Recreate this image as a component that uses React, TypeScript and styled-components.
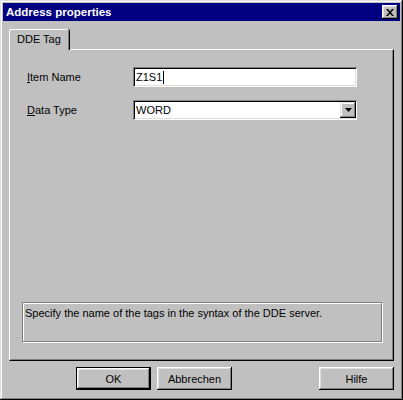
import React from "react";
import styled, { createGlobalStyle } from "styled-components";

const Global = createGlobalStyle`
  html, body {
    margin: 0;
    padding: 0;
    background: #c0c0c0;
  }
  * {
    box-sizing: border-box;
  }
`;

const Window = styled.div`
  width: 403px;
  height: 400px;
  background: #c0c0c0;
  display: flex;
  flex-direction: column;
  padding: 3px;
  box-shadow: inset -1px -1px 0 #000, inset 1px 1px 0 #dfdfdf,
    inset -2px -2px 0 #808080, inset 2px 2px 0 #fff;
  font-family: "Liberation Sans", Arial, sans-serif;
  font-size: 11px;
  color: #000;
`;

const TitleBar = styled.div`
  height: 18px;
  background: #000080;
  display: flex;
  align-items: center;
  padding: 0 2px 0 2px;
  flex: none;
`;

const Title = styled.div`
  flex: 1;
  color: #fff;
  font-weight: bold;
  font-size: 11.5px;
  padding-left: 1px;
`;

const CloseButton = styled.div`
  width: 16px;
  height: 14px;
  background: #c0c0c0;
  display: flex;
  align-items: center;
  justify-content: center;
  box-shadow: inset -1px -1px 0 #000, inset 1px 1px 0 #fff,
    inset -2px -2px 0 #808080, inset 2px 2px 0 #dfdfdf;
`;

const Body = styled.div`
  flex: 1;
  display: flex;
  flex-direction: column;
  padding: 8px 6px 7px 6px;
`;

const TabStrip = styled.div`
  display: flex;
  height: 20px;
  flex: none;
  position: relative;
  z-index: 1;
`;

const Tab = styled.div`
  width: 60px;
  height: 21px;
  background: #c0c0c0;
  border-left: 1px solid #fff;
  border-top: 1px solid #fff;
  border-top-left-radius: 2px;
  border-top-right-radius: 2px;
  box-shadow: inset -1px 0 0 #808080, 1px 0 0 #000;
  padding: 2px 0 0 7px;
  font-size: 11px;
  line-height: 14px;
`;

const Panel = styled.div`
  height: 312px;
  flex: none;
  display: flex;
  flex-direction: column;
  border-left: 1px solid #fff;
  border-top: 1px solid #fff;
  border-right: 1px solid #000;
  border-bottom: 1px solid #000;
  box-shadow: inset -1px -1px 0 #808080;
  padding: 17px 11px 18px 17px;
`;

const Field = styled.div`
  display: flex;
  align-items: center;
  height: 20px;
  margin-bottom: 13px;
`;

const Label = styled.div`
  width: 106px;
  flex: none;
`;

const Sunken = styled.div`
  width: 224px;
  height: 20px;
  background: #fff;
  display: flex;
  align-items: center;
  padding: 2px 1px 2px 3px;
  box-shadow: inset 1px 1px 0 #808080, inset -1px -1px 0 #fff,
    inset 2px 2px 0 #000, inset -2px -2px 0 #dfdfdf;
`;

const Value = styled.span`
  font-size: 11px;
  line-height: 14px;
`;

const Caret = styled.span`
  display: inline-block;
  width: 1px;
  height: 13px;
  background: #000;
  margin-left: 1px;
  vertical-align: middle;
`;

const SelectText = styled.span`
  flex: 1;
  font-size: 11px;
`;

const DropButton = styled.div`
  width: 16px;
  height: 16px;
  flex: none;
  background: #c0c0c0;
  display: flex;
  align-items: center;
  justify-content: center;
  box-shadow: inset -1px -1px 0 #000, inset 1px 1px 0 #dfdfdf,
    inset -2px -2px 0 #808080, inset 2px 2px 0 #fff;
`;

const Hint = styled.div`
  margin-top: auto;
  margin-left: -5px;
  height: 40px;
  border: 1px solid #808080;
  box-shadow: 1px 1px 0 #fff, inset 1px 1px 0 #fff;
  padding: 3px 2px;
  line-height: 14px;
`;

const ButtonRow = styled.div`
  display: flex;
  margin-top: 6px;
  padding-left: 67px;
  gap: 6px;
`;

const Button = styled.div<{ $default?: boolean; $push?: boolean }>`
  width: 75px;
  height: 23px;
  display: flex;
  align-items: center;
  justify-content: center;
  background: #c0c0c0;
  margin-left: ${(p) => (p.$push ? "auto" : "0")};
  border: ${(p) => (p.$default ? "1px solid #000" : "none")};
  box-shadow: inset -1px -1px 0 #000, inset 1px 1px 0 #fff,
    inset -2px -2px 0 #808080, inset 2px 2px 0 #dfdfdf;
`;

export default function App() {
  return (
    <>
      <Global />
      <Window>
        <TitleBar>
          <Title>Address properties</Title>
          <CloseButton>
            <svg width="8" height="7" viewBox="0 0 8 7">
              <path d="M0 0h2l2 2.5 2-2.5h2l-3 3.5 3 3.5h-2l-2-2.5-2 2.5h-2l3-3.5z" fill="#000" />
            </svg>
          </CloseButton>
        </TitleBar>
        <Body>
          <TabStrip>
            <Tab>DDE Tag</Tab>
          </TabStrip>
          <Panel>
            <Field>
              <Label>
                <u>I</u>tem Name
              </Label>
              <Sunken>
                <Value>Z1S1</Value>
                <Caret />
              </Sunken>
            </Field>
            <Field>
              <Label>
                <u>D</u>ata Type
              </Label>
              <Sunken>
                <SelectText>WORD</SelectText>
                <DropButton>
                  <svg width="7" height="4" viewBox="0 0 7 4">
                    <path d="M0 0h7l-3.5 4z" fill="#000" />
                  </svg>
                </DropButton>
              </Sunken>
            </Field>
            <Hint>Specify the name of the tags in the syntax of the DDE server.</Hint>
          </Panel>
          <ButtonRow>
            <Button $default>OK</Button>
            <Button>Abbrechen</Button>
            <Button $push>Hilfe</Button>
          </ButtonRow>
        </Body>
      </Window>
    </>
  );
}
